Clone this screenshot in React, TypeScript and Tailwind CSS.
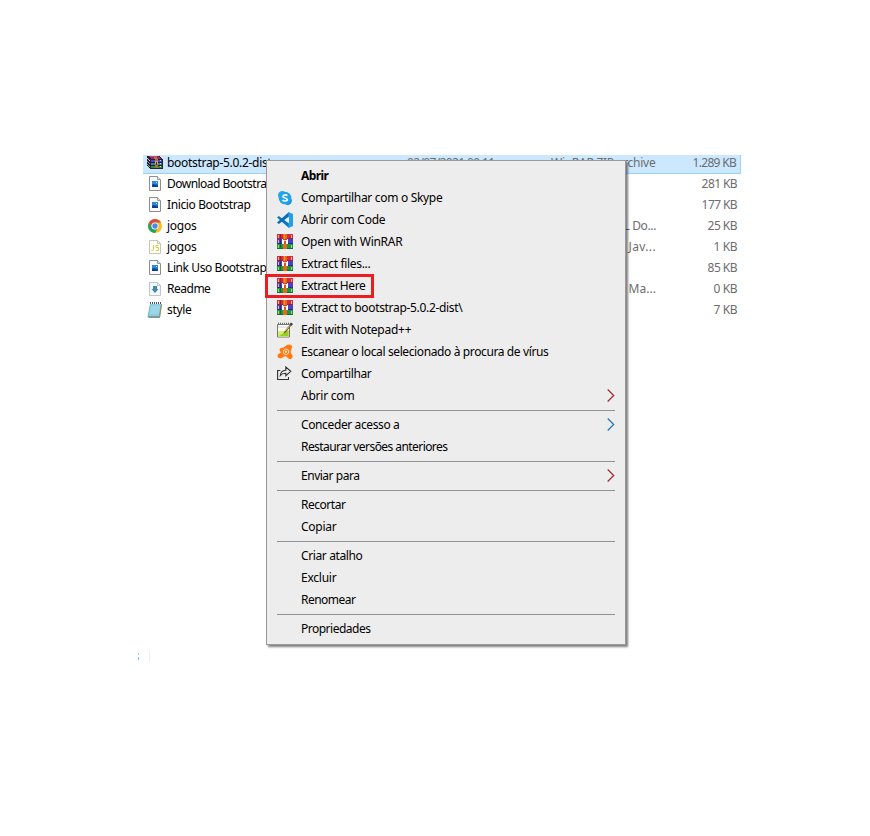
import { useLayoutEffect, useRef, type ReactNode } from "react";

type FitProps = { text: string; width: number; className?: string };

/* Text whose letter spacing is tuned so that it spans `width` pixels. */
function Fit({ text, width, className = "" }: FitProps) {
  const ref = useRef<HTMLSpanElement>(null);
  useLayoutEffect(() => {
    const el = ref.current;
    if (!el) return;
    el.style.letterSpacing = "0px";
    const natural = el.getBoundingClientRect().width;
    el.style.letterSpacing = `${(width - 0.6 - natural) / text.length}px`;
  }, [text, width]);
  return (
    <span ref={ref} className={`inline-block whitespace-pre ${className}`}>
      {text}
    </span>
  );
}

function ZipIcon() {
  return (
    <svg width="16" height="13" viewBox="0 0 16 13" shapeRendering="crispEdges">
      <path d="M0 0h12l4 3v10H4L0 10z" fill="#2a1c34" />
      <path d="M1 0h10l3 2v1H4z" fill="#9c2468" />
      <path d="M2 0h8v1H3z" fill="#c64a86" />
      <path d="M4 4h11v2H4z" fill="#4a44d8" />
      <path d="M0 2l3 2v1L0 3z" fill="#cfc6d6" />
      <path d="M0 5l3 2v1L0 6z" fill="#8c86d6" />
      <path d="M4 7h11v2H4z" fill="#2a8a8e" />
      <path d="M4 10h11v2H4z" fill="#2a8e38" />
      <path d="M0 8l3 2v1L0 9z" fill="#70a878" />
      <path d="M7 1h3l1 2v9H8V4z" fill="#a8743e" />
      <path d="M8 5h3v3H8z" fill="#c9a676" />
      <path d="M9 6h1v3H9z" fill="#44351f" />
      <path d="M13 4h1v1h-1zM13 7h1v1h-1zM13 10h1v1h-1z" fill="#d8d8e8" />
    </svg>
  );
}

function Page({ children }: { children?: ReactNode }) {
  return (
    <svg width="12" height="16" viewBox="0 0 12 16">
      <path d="M.5.5h8l3 3v11H.5z" fill="#fbfbfb" stroke="#8e8e8e" />
      <path d="M8.5.5v3h3" fill="#e8e8e8" stroke="#9a9a9a" />
      {children}
    </svg>
  );
}

function ImageFileIcon() {
  return (
    <Page>
      <path d="M3 5h6v6H3z" fill="#1d6fc0" />
      <path d="M3 5h6v3H3z" fill="#2b8bd8" />
      <path d="M3 11V9.500l2-1.500 2 1.500 1-.5 1 1v1z" fill="#123f80" />
      <path d="M7 6h1v1H7z" fill="#e8f4ff" />
    </Page>
  );
}

function ChromeIcon() {
  return (
    <svg width="14" height="14" viewBox="0 0 14 14" className="mb-px">
      <circle cx="7" cy="7" r="7" fill="#fbc116" />
      <path d="M.94 3.5A7 7 0 0 1 13.06 3.5H7A3.5 3.5 0 0 0 3.97 8.75z" fill="#dd4b3e" />
      <path d="M.94 3.5A7 7 0 0 0 7 14L10.03 8.75A3.5 3.5 0 0 1 3.97 8.75z" fill="#1da362" />
      <circle cx="7" cy="7" r="3.500" fill="#fff" />
      <circle cx="7" cy="7" r="2.700" fill="#4a8af4" />
    </svg>
  );
}

function JsIcon() {
  return (
    <svg width="12" height="14" viewBox="0 0 12 14" className="mb-px">
      <path d="M.5.5h8l3 3v10H.5z" fill="#fffef4" stroke="#c4c4bc" />
      <path d="M8.5.5v3h3" fill="none" stroke="#c4c4bc" />
      <path d="M4.500 5v4.200q0 1.300-1.200 1.300H2.400M9.500 5.500H7v2h2.500v3H6.700" fill="none" stroke="#d9c94e" />
    </svg>
  );
}

function MarkdownIcon() {
  return (
    <svg width="12" height="14" viewBox="0 0 12 14" className="mb-px">
      <path d="M.5.5h8l3 3v10H.5z" fill="#f4f7f9" stroke="#bcc6cc" />
      <path d="M8.5.5v3h3" fill="none" stroke="#bcc6cc" />
      <path d="M4 4h4v3h1.500L6 11 2.500 7H4z" fill="#4387ae" />
    </svg>
  );
}

function NotepadIcon() {
  return (
    <svg width="16" height="16" viewBox="0 0 16 16">
      <path d="M3 2h12l-2 13.500H.5z" fill="#5aa9c4" />
      <path d="M3.500 2h10.500L12 14H1.500z" fill="#8fcfe2" />
      <path d="M4 5h9M3.500 7h9M3 9h9M3 11h9" stroke="#b3e2ed" strokeWidth=".8" />
      <path d="M14.500 2.500l-2 13H2" fill="none" stroke="#a38e61" />
      <path d="M3 1h12" stroke="#3f5a66" strokeWidth="2" strokeDasharray="1 1" />
    </svg>
  );
}

function SkypeIcon() {
  return (
    <svg width="14" height="14" viewBox="0 0 14 14">
      <circle cx="4.300" cy="4.300" r="4.200" fill="#28a8ea" />
      <circle cx="9.700" cy="9.700" r="4.200" fill="#1893df" />
      <circle cx="7" cy="7" r="6.300" fill="#22a2e8" />
      <path
        d="M9.300 4.800C8.500 3.600 4.900 3.500 4.900 5.300c0 2 4.400 1.200 4.400 3.200 0 1.900-3.900 1.800-4.800.3"
        fill="none"
        stroke="#fff"
        strokeWidth="1.600"
      />
    </svg>
  );
}

function CodeIcon() {
  return (
    <svg width="16" height="16" viewBox="0 0 16 16">
      <path d="M0 5.600L1.800 4 12 11.500V16z" fill="#0a78c2" />
      <path d="M0 10.400L1.800 12 12 4.500V0z" fill="#0a6cb2" />
      <path d="M11.500 0L16 2v12l-4.500 2z" fill="#259fe8" />
      <path d="M12 5v6L8 8z" fill="#ededed" />
    </svg>
  );
}

function WinRarIcon() {
  return (
    <svg width="16" height="16" viewBox="0 0 16 16" shapeRendering="crispEdges">
      <path d="M0 0h16v5H0z" fill="#d42a44" />
      <path d="M0 5h16v5H0z" fill="#4a42c0" />
      <path d="M0 10h16v5H0z" fill="#149a48" />
      <path d="M0 4h16v1H0z" fill="#a01c3a" />
      <path d="M0 9h16v1H0z" fill="#2f2a88" />
      <path d="M0 14h16v1H0z" fill="#0b7434" />
      <path d="M1 1h1v3H1zM1 6h1v3H1zM1 11h1v3H1zM14 1h1v3h-1zM14 11h1v3h-1z" fill="#e8b94b" />
      <path d="M3 0h1v4H3z" fill="#8e1c3c" />
      <path d="M3 5h1v4H3z" fill="#2f2a88" />
      <path d="M3 10h1v4H3z" fill="#0b6a30" />
      <path d="M6 0h4v15H6z" fill="#ea6a14" />
      <path d="M7 0h1v5H7z" fill="#f49422" />
      <path d="M5 5h6v5H5z" fill="#fff" />
      <path d="M6 5h4v1H6z" fill="#c8402c" />
      <path d="M7 7h2v3H7z" fill="#d8502c" />
      <path d="M7 6h2v1H7z" fill="#f6c8b4" />
    </svg>
  );
}

function NppIcon() {
  return (
    <svg width="16" height="16" viewBox="0 0 16 16">
      <path d="M.5 2.500h12v12.500H.5z" fill="#fff" stroke="#77756d" />
      <path d="M1 9h11v5.500H1z" fill="#d3ee6a" />
      <path d="M2 14l9.500-6v6z" fill="#98cf1e" />
      <path d="M1 1.500h11" stroke="#6a6a6a" strokeWidth="1.500" strokeDasharray="1 1" />
      <path d="M1 5h10" stroke="#d1d1d1" />
      <path d="M6.500 11.500l1-2.500 5.500-6.500 1.500 1-6 7z" fill="#6a5a38" />
      <path d="M7.500 9.500l5.500-6" stroke="#f0c642" />
      <path d="M12.500 2l1.500-1.500L16 2l-1.500 2z" fill="#424242" />
    </svg>
  );
}

function AvastIcon() {
  return (
    <svg width="16" height="16" viewBox="0 0 16 16">
      <path
        d="M3 4.600Q4 3.600 6 3.800L10 1Q12.500-.2 14.300 1.200q1.200 1.200.5 3L13.500 8l1.900 3.400q.7 1.800-.7 3-1.600 1-3.200 0L8.500 12 4 14.200q-2.200.5-3.300-1.200Q0 11 1.800 9.800L4 8.500 2.800 6.800Q2.300 5.500 3 4.600z"
        fill="#ff7a13"
      />
      <path d="M8.800 5l2.600 1.200.3 2.800-2.400 1.700L6.600 9.400 6.400 6.600z" fill="none" stroke="#fff" strokeWidth=".8" />
      <circle cx="9" cy="7.800" r="1" fill="#fff" />
    </svg>
  );
}

function ShareIcon() {
  return (
    <svg width="16" height="15" viewBox="0 0 16 15" fill="none" stroke="#303030" strokeWidth="1.100" className="mb-px">
      <path d="M3.300 4.500H.6v9h10.900V11" />
      <path d="M3.300 9.500q.4-5 5.500-5.300V1l5 4.300-5 4.400V7.200Q5.300 7 3.300 9.500z" />
    </svg>
  );
}

function Chevron({ color }: { color: string }) {
  return (
    <svg width="8" height="13" viewBox="0 0 8 13" fill="none" className="mb-px block">
      <path d="M.7.5l6 6-6 6" stroke={color} strokeWidth="1.200" />
    </svg>
  );
}

type FileRow = { icon: ReactNode; name: string; w: number; type?: string; tw?: number; size: string; sw: number };

const files: FileRow[] = [
  { icon: <ZipIcon />, name: "bootstrap-5.0.2-dist", w: 105, size: "1.289 KB", sw: 44 },
  { icon: <ImageFileIcon />, name: "Download Bootstrap", w: 107, size: "281 KB", sw: 36 },
  { icon: <ImageFileIcon />, name: "Inicio Bootstrap", w: 84, size: "177 KB", sw: 36 },
  { icon: <ChromeIcon />, name: "jogos", w: 30, type: "L Do...", tw: 33, size: "25 KB", sw: 30 },
  { icon: <JsIcon />, name: "jogos", w: 30, type: "Jav...", tw: 28, size: "1 KB", sw: 24 },
  { icon: <ImageFileIcon />, name: "Link Uso Bootstrap", w: 100, size: "85 KB", sw: 30 },
  { icon: <MarkdownIcon />, name: "Readme", w: 44, type: "Ma...", tw: 28, size: "0 KB", sw: 24 },
  { icon: <NotepadIcon />, name: "style", w: 25, size: "7 KB", sw: 24 },
];

type Item = { text: string; w: number; icon?: ReactNode; bold?: boolean; arrow?: string };

const red = "#a3262f";
const blue = "#1b76b4";

const groups: Item[][] = [
  [
    { text: "Abrir", w: 28, bold: true },
    { text: "Compartilhar com o Skype", w: 142, icon: <SkypeIcon /> },
    { text: "Abrir com Code", w: 85, icon: <CodeIcon /> },
    { text: "Open with WinRAR", w: 102, icon: <WinRarIcon /> },
    { text: "Extract files...", w: 70, icon: <WinRarIcon /> },
    { text: "Extract Here", w: 65, icon: <WinRarIcon /> },
    { text: "Extract to bootstrap-5.0.2-dist\\", w: 162, icon: <WinRarIcon /> },
    { text: "Edit with Notepad++", w: 111, icon: <NppIcon /> },
    { text: "Escanear o local selecionado à procura de vírus", w: 248, icon: <AvastIcon /> },
    { text: "Compartilhar", w: 71, icon: <ShareIcon /> },
    { text: "Abrir com", w: 54, arrow: red },
  ],
  [
    { text: "Conceder acesso a", w: 99, arrow: blue },
    { text: "Restaurar versões anteriores", w: 147 },
  ],
  [{ text: "Enviar para", w: 59, arrow: red }],
  [
    { text: "Recortar", w: 45 },
    { text: "Copiar", w: 36 },
  ],
  [
    { text: "Criar atalho", w: 62 },
    { text: "Excluir", w: 36 },
    { text: "Renomear", w: 55 },
  ],
  [{ text: "Propriedades", w: 70 }],
];

function ContextMenu() {
  return (
    <div className="absolute left-[266px] top-[160px] w-[360px] border border-[#999999] bg-[#ededed] py-1 text-black shadow-[2px_2px_2px_#00000080]">
      {groups.map((group, g) => (
        <div key={g}>
          {g > 0 && (
            <div className="mr-[10px] ml-[10px] flex h-[7px] items-center">
              <div className="h-px w-full bg-[#919191]" />
            </div>
          )}
          {group.map((item) => (
            <div key={item.text} className="flex h-[22px] items-center pr-[10px] pl-[10px]">
              <div className="mr-2 flex w-4 shrink-0 items-center justify-center">{item.icon}</div>
              <Fit text={item.text} width={item.w} className={item.bold ? "font-bold" : ""} />
              {item.arrow && (
                <div className="ml-auto">
                  <Chevron color={item.arrow} />
                </div>
              )}
            </div>
          ))}
        </div>
      ))}
      <div className="absolute top-[113px] left-[-2px] h-[24px] w-[109px] border-3 border-[#ed1c24]" />
    </div>
  );
}

export default function App() {
  return (
    <div className="relative h-[836px] w-[870px] overflow-hidden bg-white pt-[155px] pl-[143px] font-['Noto_Sans','Open_Sans',sans-serif] text-[12px] leading-[18px]">
      <div className="w-[598px]">
        {files.map((file, i) => (
          <div
            key={i}
            className={`flex items-center pr-1 pl-1 ${i === 0 ? "h-[19px] border-r border-b border-[#99d1ff] bg-[#cce8ff] pb-[3px]" : "h-[21px] pb-px"}`}
          >
            <div className="mr-1 flex w-4 shrink-0 justify-center">{file.icon}</div>
            <div className="w-[232px] shrink-0">
              <Fit text={file.name} width={file.w} />
            </div>
            {i === 0 && (
              <div className="flex items-center text-[#6d6d6d]">
                <div className="w-[152px] shrink-0 pl-2">
                  <Fit text="02/07/2021 09:11" width={88} />
                </div>
                <Fit text="WinRAR ZIP archive" width={105} />
              </div>
            )}
            {file.type && (
              <div className="flex w-[257px] justify-end text-[#6d6d6d]">
                <Fit text={file.type} width={file.tw ?? 0} />
              </div>
            )}
            <div className="ml-auto text-[#6d6d6d]">
              <Fit text={file.size} width={file.sw} />
            </div>
          </div>
        ))}
      </div>
      <svg className="absolute top-[650px] left-[137px]" width="14" height="14" viewBox="0 0 14 14">
        <path d="M1 3h1v2H1z" fill="#9eddff" />
        <path d="M1 7h1v3H1z" fill="#62c3fa" />
        <path d="M12 1h1v11h-1z" fill="#f1f1f1" />
      </svg>
      <ContextMenu />
    </div>
  );
}
